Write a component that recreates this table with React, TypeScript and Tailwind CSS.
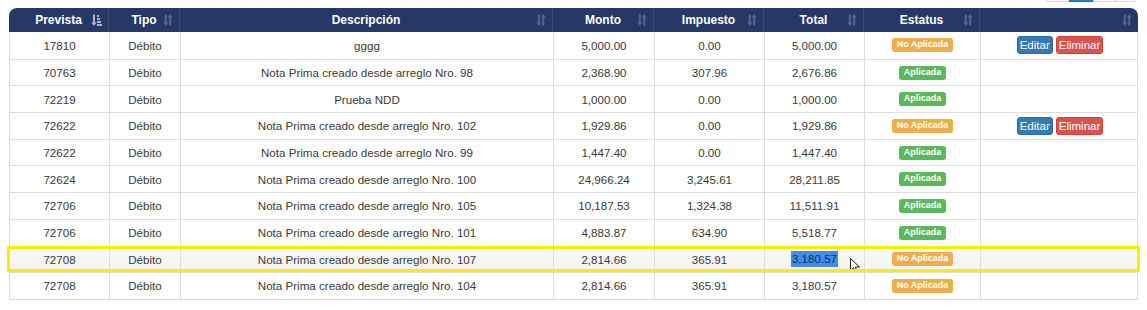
import React from "react";

type Row = {
  prevista: string;
  descripcion: string;
  monto: string;
  impuesto: string;
  total: string;
  aplicada: boolean;
  acciones?: boolean;
  marcada?: boolean;
};

const rows: Row[] = [
  { prevista: "17810", descripcion: "gggg", monto: "5,000.00", impuesto: "0.00", total: "5,000.00", aplicada: false, acciones: true },
  { prevista: "70763", descripcion: "Nota Prima creado desde arreglo Nro. 98", monto: "2,368.90", impuesto: "307.96", total: "2,676.86", aplicada: true },
  { prevista: "72219", descripcion: "Prueba NDD", monto: "1,000.00", impuesto: "0.00", total: "1,000.00", aplicada: true },
  { prevista: "72622", descripcion: "Nota Prima creado desde arreglo Nro. 102", monto: "1,929.86", impuesto: "0.00", total: "1,929.86", aplicada: false, acciones: true },
  { prevista: "72622", descripcion: "Nota Prima creado desde arreglo Nro. 99", monto: "1,447.40", impuesto: "0.00", total: "1,447.40", aplicada: true },
  { prevista: "72624", descripcion: "Nota Prima creado desde arreglo Nro. 100", monto: "24,966.24", impuesto: "3,245.61", total: "28,211.85", aplicada: true },
  { prevista: "72706", descripcion: "Nota Prima creado desde arreglo Nro. 105", monto: "10,187.53", impuesto: "1,324.38", total: "11,511.91", aplicada: true },
  { prevista: "72706", descripcion: "Nota Prima creado desde arreglo Nro. 101", monto: "4,883.87", impuesto: "634.90", total: "5,518.77", aplicada: true },
  { prevista: "72708", descripcion: "Nota Prima creado desde arreglo Nro. 107", monto: "2,814.66", impuesto: "365.91", total: "3,180.57", aplicada: false, marcada: true },
  { prevista: "72708", descripcion: "Nota Prima creado desde arreglo Nro. 104", monto: "2,814.66", impuesto: "365.91", total: "3,180.57", aplicada: false },
];

const headers = ["Prevista", "Tipo", "Descripción", "Monto", "Impuesto", "Total", "Estatus", ""];

const cols = "grid grid-cols-[99px_71px_373px_101px_110px_100px_116px_159px]";

function SortIcon({ active }: { active?: boolean }) {
  if (active) {
    return (
      <svg width="11" height="12" viewBox="0 0 11 12" className="text-[#a9b3cc]">
        <path d="M2 0.5h2v8h1.8L3 11.8 0.2 8.5H2z" fill="currentColor" />
        <rect x="6" y="1" width="2" height="2" fill="currentColor" />
        <rect x="6" y="4" width="3" height="2" fill="currentColor" />
        <rect x="6" y="7" width="4" height="2" fill="currentColor" />
        <rect x="6" y="10" width="5" height="2" fill="currentColor" />
      </svg>
    );
  }
  return (
    <svg width="10" height="12" viewBox="0 0 10 12" className="text-[#56668f]">
      <path d="M1.8 0.5h2v8h1.6L2.8 11.8 0.2 8.5h1.6z" fill="currentColor" />
      <path d="M6.2 11.5h2v-8h1.6L7.2 0.2 4.6 3.5h1.6z" fill="currentColor" />
    </svg>
  );
}

function Cursor() {
  return (
    <svg width="11" height="15" viewBox="0 0 11 15" className="absolute left-[85px] top-[11px]">
      <path d="M0.5 0.5v12l3-2.8 2 4.5 1.8-0.8-2-4.4h4.2z" fill="#fff" stroke="#222" strokeWidth="1" strokeLinejoin="round" />
    </svg>
  );
}

function Badge({ aplicada }: { aplicada: boolean }) {
  return (
    <span
      className={
        aplicada
          ? "rounded-[3px] bg-[#5cb85c] px-[5px] pb-[3px] pt-[2px] text-[9px] font-bold leading-[9px] text-white"
          : "rounded-[3px] bg-[#f0ad4e] px-[4.5px] pb-[3px] pt-[2px] text-[9px] font-bold leading-[9px] text-white"
      }
    >
      {aplicada ? "Aplicada" : "No Aplicada"}
    </span>
  );
}

export default function App() {
  return (
    <div className="min-h-[310px] bg-white pl-[9px] font-['Liberation_Sans',Arial,sans-serif]">
      <div className="flex h-[8px] justify-end pr-[11px]">
        <div className="flex h-[2px] items-end overflow-hidden">
          <div className="h-[30px] w-[23px] border border-[#dddddd] bg-white" />
          <div className="h-[30px] w-[24px] border border-[#2e6da4] bg-[#337ab7]" />
          <div className="h-[30px] w-[22px] border border-[#dddddd] bg-white" />
          <div className="h-[30px] w-[21px] border border-[#dddddd] bg-white" />
        </div>
      </div>

      <div className="w-[1129px] text-[11.6px] text-[#3a3a3a]">
        <div className={`${cols} h-[24px] rounded-t-[8px] bg-[#263866] text-[12px] font-bold text-white`}>
          {headers.map((h, i) => (
            <div
              key={i}
              className={`relative flex items-center justify-center ${i > 0 ? "border-l border-[#3a4b7a]" : ""}`}
            >
              <span>{h}</span>
              <span className="absolute right-[6px] top-[6px]">
                <SortIcon active={i === 0} />
              </span>
            </div>
          ))}
        </div>

        <div className="border-x border-b border-[#dcdcdc]">
          {rows.map((r, i) => (
            <div
              key={i}
              className={`${cols} relative h-[26.7px] ${i > 0 ? "border-t border-[#dedede]" : ""} ${r.marcada ? "bg-[#f6f6f6]" : "bg-white"}`}
            >
              <div className="flex items-center justify-center">{r.prevista}</div>
              <div className="flex items-center justify-center border-l border-[#dedede]">Débito</div>
              <div className="flex items-center justify-center border-l border-[#dedede]">{r.descripcion}</div>
              <div className="flex items-center justify-center border-l border-[#dedede]">{r.monto}</div>
              <div className="flex items-center justify-center border-l border-[#dedede]">{r.impuesto}</div>
              <div className="relative flex items-center justify-center border-l border-[#dedede]">
                {r.marcada ? (
                  <>
                    <span className="bg-[#3d8ef0] px-[1px] leading-[16px] text-[#1b2d4c]">{r.total}</span>
                    <Cursor />
                  </>
                ) : (
                  r.total
                )}
              </div>
              <div className="flex items-center justify-center border-l border-[#dedede]">
                <Badge aplicada={r.aplicada} />
              </div>
              <div className="flex items-center justify-center gap-[3px] border-l border-[#dedede]">
                {r.acciones ? (
                  <>
                    <button
                      type="button"
                      className="h-[18px] rounded-[3px] border border-[#2e6da4] bg-[#337ab7] px-[2px] text-[11.5px] leading-[16px] text-white"
                    >
                      Editar
                    </button>
                    <button
                      type="button"
                      className="h-[18px] rounded-[3px] border border-[#d43f3a] bg-[#d9534f] px-[2px] text-[11.5px] leading-[16px] text-white"
                    >
                      Eliminar
                    </button>
                  </>
                ) : null}
              </div>
              {r.marcada ? (
                <div className="pointer-events-none absolute -left-[3px] -right-[3px] -top-[1px] bottom-0 border-[3px] border-[#f7ee00]" />
              ) : null}
            </div>
          ))}
        </div>
      </div>
    </div>
  );
}
